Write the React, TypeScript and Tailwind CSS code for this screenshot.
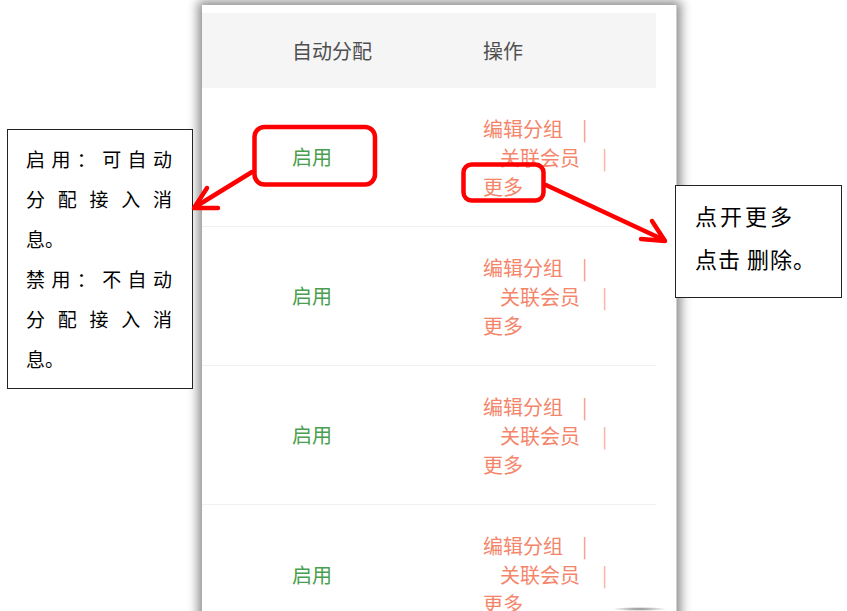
import React from "react";

const rows = [0, 1, 2, 3];

function Row({ last }: { last?: boolean }) {
  return (
    <div
      className={`flex h-[139px] items-center pl-[90px] ${last ? "" : "border-b border-[#f0f0f0]"}`}
    >
      <div className="w-[191px] text-[20px] leading-none text-[#4a9e4f]">启用</div>
      <div className="flex flex-col text-[20px] leading-[29px] text-[#f5856a]">
        <div className="flex items-center">
          <span>编辑分组</span>
          <span className="ml-[19px] text-[#f79a82]">|</span>
        </div>
        <div className="flex items-center pl-[17px]">
          <span>关联会员</span>
          <span className="ml-[22px] text-[#f9b0a0]">|</span>
        </div>
        <div>更多</div>
      </div>
    </div>
  );
}

function JLine({ chars }: { chars: string[] }) {
  return (
    <div className="flex h-[40px] items-center justify-between">
      {chars.map((c, i) => (
        <span key={i} className="w-[19px] text-center">
          {c}
        </span>
      ))}
    </div>
  );
}

export default function App() {
  return (
    <div
      className="relative h-[611px] w-[847px] overflow-hidden bg-white"
      style={{ fontFamily: '"Noto Sans CJK SC", "Noto Sans", sans-serif' }}
    >
      {/* phone screenshot panel */}
      <div className="ml-[202px] mt-[5px] h-[620px] w-[475px] border-r border-[#cfcfcf] bg-white pt-[8px] shadow-[0_0_10px_4px_rgba(0,0,0,0.45)]">
        <div className="w-[454px]">
          <div className="flex h-[75px] items-center bg-[#f5f5f5] pl-[90px] text-[20px] text-[#4f4f4f]">
            <div className="w-[191px]">自动分配</div>
            <div>操作</div>
          </div>
          {rows.map((r) => (
            <Row key={r} last={r === 3} />
          ))}
        </div>
      </div>

      {/* bottom-right small shadow bar */}
      <div className="absolute left-[612px] top-[607px] h-[4px] w-[55px] rounded-full bg-[radial-gradient(ellipse_at_center,rgba(80,80,80,0.7),rgba(80,80,80,0)_70%)]" />

      {/* left note */}
      <div className="absolute left-[7px] top-[129px] h-[260px] w-[186px] border border-[#222] bg-white pl-[18px] pr-[20px] pt-[9px] text-[19px] text-black">
        <JLine chars={["启", "用", "：", "可", "自", "动"]} />
        <JLine chars={["分", "配", "接", "入", "消"]} />
        <div className="flex h-[40px] items-center">息。</div>
        <JLine chars={["禁", "用", "：", "不", "自", "动"]} />
        <JLine chars={["分", "配", "接", "入", "消"]} />
        <div className="flex h-[40px] items-center">息。</div>
      </div>

      {/* right note */}
      <div className="absolute left-[675px] top-[185px] h-[113px] w-[167px] border border-[#222] bg-white pl-[19px] pt-[8px] text-[22px] tracking-[3px] text-black">
        <div className="flex h-[43px] items-center">点开更多</div>
        <div className="flex h-[43px] items-center tracking-[1px]">点击 删除。</div>
      </div>

      {/* red annotations */}
      <svg
        className="pointer-events-none absolute left-0 top-0"
        width="847"
        height="611"
        viewBox="0 0 847 611"
      >
        <g fill="none" stroke="#ff0000" strokeWidth="4.5" strokeLinecap="round" strokeLinejoin="round">
          <rect x="254.5" y="127" width="120.5" height="57.5" rx="10" />
          <rect x="463.5" y="164.5" width="80" height="36" rx="8" />
          <line x1="252" y1="172" x2="195" y2="207" />
          <polyline points="207,188 194,208 218,208" />
          <line x1="546" y1="185" x2="664" y2="240" />
          <polyline points="641,239 665,241 652,221" />
        </g>
      </svg>
    </div>
  );
}
